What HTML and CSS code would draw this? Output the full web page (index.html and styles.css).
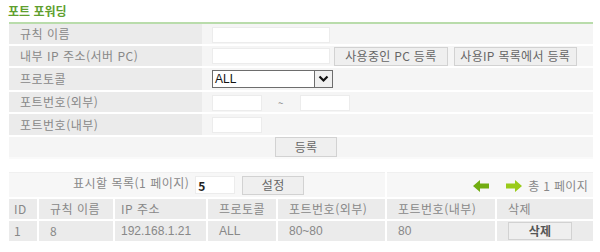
FILE: index.html
```html
<!DOCTYPE html>
<html lang="ko">
  <head>
    <meta charset="UTF-8" />
    <title>포트 포워딩</title>
    <link rel="stylesheet" href="styles.css">
  </head>
  <body>
    <h1 class="title">포트 포워딩</h1>

    <table class="form">
      <tr>
        <td class="label">규칙 이름</td>
        <td class="value"><input class="field" type="text"></td>
      </tr>
      <tr>
        <td class="label">내부 IP 주소(서버 PC)</td>
        <td class="value">
          <input class="field" type="text">
          <button class="btn btn-pc">사용중인 PC 등록</button>
          <button class="btn btn-list">사용IP 목록에서 등록</button>
        </td>
      </tr>
      <tr class="tall">
        <td class="label">프로토콜</td>
        <td class="value">
          <div class="select">
            <span class="select-text">ALL</span>
            <span class="select-arrow">
              <svg width="11" height="8" viewBox="0 0 11 8"><path d="M1.5 1.5 L5.5 5.5 L9.5 1.5" fill="none" stroke="#111" stroke-width="2.2"/></svg>
            </span>
          </div>
        </td>
      </tr>
      <tr>
        <td class="label">포트번호(외부)</td>
        <td class="value">
          <input class="field short" type="text"><span class="tilde">~</span><input class="field short" type="text">
        </td>
      </tr>
      <tr class="mid">
        <td class="label">포트번호(내부)</td>
        <td class="value"><input class="field short" type="text"></td>
      </tr>
      <tr>
        <td class="submit" colspan="2"><button class="btn btn-add">등록</button></td>
      </tr>
    </table>

    <table class="list">
      <tr class="pager">
        <td colspan="5" class="per-page">
          표시할 목록(1 페이지) <input class="field count" type="text" value="5"><button class="btn btn-set">설정</button>
        </td>
        <td colspan="2" class="pages">
          <svg class="arrow" width="16" height="12" viewBox="0 0 16 12"><path d="M0 6 L7 0 L7 3.5 L16 3.5 L16 8.5 L7 8.5 L7 12 Z" fill="#72ad12"/></svg>
          <svg class="arrow arrow-next" width="16" height="12" viewBox="0 0 16 12"><path d="M16 6 L9 0 L9 3.5 L0 3.5 L0 8.5 L9 8.5 L9 12 Z" fill="#9acb1a"/></svg>
          <span class="total">총 1 페이지</span>
        </td>
      </tr>
      <tr class="head">
        <td class="c-id">ID</td>
        <td class="c-name">규칙 이름</td>
        <td class="c-ip">IP 주소</td>
        <td class="c-proto">프로토콜</td>
        <td class="c-ext">포트번호(외부)</td>
        <td class="c-int">포트번호(내부)</td>
        <td class="c-del">삭제</td>
      </tr>
      <tr class="row">
        <td class="c-id">1</td>
        <td class="c-name">8</td>
        <td class="c-ip">192.168.1.21</td>
        <td class="c-proto">ALL</td>
        <td class="c-ext">80~80</td>
        <td class="c-int">80</td>
        <td class="c-del"><button class="btn btn-del">삭제</button></td>
      </tr>
    </table>
  </body>
</html>
```

FILE: styles.css
```css
body {
  margin: 0;
  padding: 0 7px 0 9px;
  font-family: "Noto Sans CJK KR", sans-serif;
  font-size: 12px;
  letter-spacing: 0.5px;
  color: #888;
  background: #fff;
}

.title {
  margin: 0;
  padding-top: 4px;
  margin-left: -1px;
  height: 18px;
  font-size: 12px;
  line-height: 14px;
  font-weight: bold;
  letter-spacing: 0;
  color: #5f9f2f;
}

table {
  width: 100%;
  border-collapse: collapse;
}

.form {
  border-top: 2px solid #b9dcab;
}

.form td {
  height: 20px;
  padding: 0;
  line-height: 16px;
  border-bottom: 2px solid #fff;
  background: #f5f5f5;
}

.form .tall td {
  height: 22px;
}

.form .mid td {
  height: 21px;
}

.form .label {
  width: 182px;
  padding-left: 11px;
  background: #ebebeb;
}

.form .value {
  padding-left: 10px;
}

.form .submit {
  padding-left: 266px;
  border-bottom: 2px solid #fafafa;
}

.field {
  box-sizing: border-box;
  width: 118px;
  height: 16px;
  margin: 0;
  padding: 0 2px;
  border: 1px solid #ececec;
  background: #fff;
  font: inherit;
  vertical-align: middle;
}

.field.short {
  width: 50px;
}

.tilde {
  display: inline-block;
  width: 38px;
  text-align: center;
  font-size: 10px;
  vertical-align: middle;
}

.btn {
  box-sizing: border-box;
  height: 19px;
  margin: 0;
  padding: 0;
  border: 1px solid #d2d2d2;
  background: #efefef;
  color: #666;
  font-family: inherit;
  font-size: 12px;
  letter-spacing: 0.3px;
  line-height: 16px;
  vertical-align: middle;
}

.btn-pc {
  width: 114px;
  margin-left: 0;
}

.btn-list {
  width: 123px;
  margin-left: 2px;
}

.btn-add {
  width: 62px;
  height: 20px;
}

.select {
  box-sizing: border-box;
  display: flex;
  width: 121px;
  height: 18px;
  border: 1px solid #6d6d6d;
  background: #fff;
}

.select-text {
  flex: 1;
  padding-left: 2px;
  font-family: "Liberation Sans", sans-serif;
  font-size: 12px;
  letter-spacing: 0;
  line-height: 16px;
  color: #111;
}

.select-arrow {
  display: flex;
  align-items: center;
  justify-content: center;
  width: 17px;
  border-left: 1px solid #6d6d6d;
  background: #f0f0f0;
}

.list {
  margin-top: 13px;
}

.list td {
  padding: 0;
  line-height: 16px;
  white-space: nowrap;
}

.pager td {
  height: 24px;
  background: #f7f7f7;
  border-top: 1px solid #f0f0f0;
}

.per-page {
  padding-left: 64px !important;
  border-right: 2px solid #fff;
}

.count {
  width: 40px;
  height: 18px;
  margin-left: 2px;
  color: #222;
  font-weight: bold;
}

.btn-set {
  width: 62px;
  height: 19px;
  margin-left: 7px;
}

.pages {
  text-align: right;
  padding-right: 5px !important;
}

.arrow {
  vertical-align: middle;
}

.arrow-next {
  margin-left: 14px;
}

.total {
  margin-left: 2px;
  letter-spacing: 0.3px;
  vertical-align: middle;
}

.head td,
.row td {
  height: 20px;
  background: #ebebeb;
  border-top: 2px solid #fff;
  border-left: 2px solid #fff;
  padding-left: 11px;
}

.head td:first-child,
.row td:first-child {
  border-left: none;
}

.c-id { width: 23px; padding-left: 5px !important; }
.c-name { width: 63px; }
.c-ip { width: 85px; padding-left: 6px !important; }
.c-proto { width: 57px; }
.c-ext { width: 96px; }
.c-int { width: 97px; }

.row td {
  letter-spacing: 0;
}

.row .c-ip,
.row .c-proto,
.row .c-ext,
.row .c-int {
  font-family: "Liberation Sans", sans-serif;
}

.btn-del {
  width: 64px;
  height: 18px;
  font-weight: bold;
  color: #555;
}
```
